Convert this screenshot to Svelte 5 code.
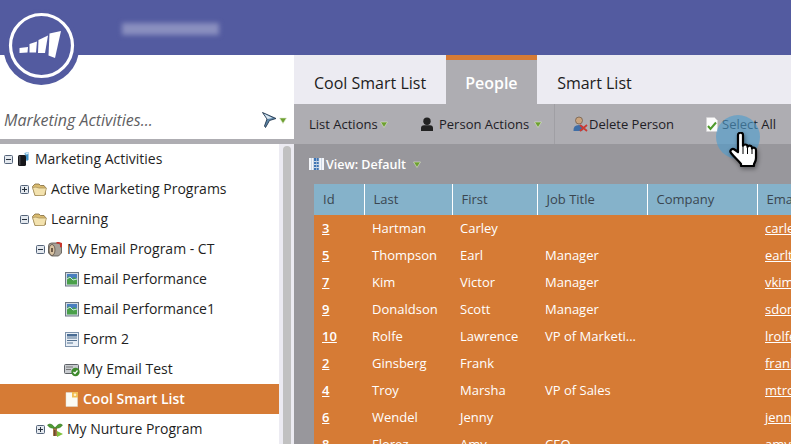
<script>
  const tree = [
    { label: 'Marketing Activities', depth: 0, toggle: 'minus', icon: 'book' },
    { label: 'Active Marketing Programs', depth: 1, toggle: 'plus', icon: 'folder' },
    { label: 'Learning', depth: 1, toggle: 'minus', icon: 'folder' },
    { label: 'My Email Program - CT', depth: 2, toggle: 'minus', icon: 'mailbox' },
    { label: 'Email Performance', depth: 3, icon: 'report' },
    { label: 'Email Performance1', depth: 3, icon: 'report' },
    { label: 'Form 2', depth: 3, icon: 'form' },
    { label: 'My Email Test', depth: 3, icon: 'test' },
    { label: 'Cool Smart List', depth: 3, icon: 'list', active: true },
    { label: 'My Nurture Program', depth: 2, toggle: 'plus', icon: 'sprout' }
  ];
  const columns = ['Id', 'Last', 'First', 'Job Title', 'Company', 'Email'];
  const rows = [
    ['3', 'Hartman', 'Carley', '', '', 'carley'],
    ['5', 'Thompson', 'Earl', 'Manager', '', 'earlt@'],
    ['7', 'Kim', 'Victor', 'Manager', '', 'vkim@'],
    ['9', 'Donaldson', 'Scott', 'Manager', '', 'sdona'],
    ['10', 'Rolfe', 'Lawrence', 'VP of Marketi...', '', 'lrolfe'],
    ['2', 'Ginsberg', 'Frank', '', '', 'frank'],
    ['4', 'Troy', 'Marsha', 'VP of Sales', '', 'mtroy'],
    ['6', 'Wendel', 'Jenny', '', '', 'jenny'],
    ['8', 'Florez', 'Amy', 'CEO', '', 'amyfl']
  ];
</script>

{#snippet arrow()}
  <svg class="arrow" viewBox="0 0 8 7" width="8" height="7"><path d="M0.5 1h7L4 6.5z" fill="#6da030" stroke="#dfe8d0" stroke-width="0.6" /></svg>
{/snippet}

{#snippet toggleBox(kind)}
  <svg class="toggle" viewBox="0 0 9 9" width="9" height="9">
    <rect x="0.5" y="0.5" width="8" height="8" rx="1" fill="#e3e8ee" stroke="#55647a" />
    <path d="M2 4.500h5" stroke="#26303c" stroke-width="1" />
    {#if kind === 'plus'}<path d="M4.500 2v5" stroke="#26303c" stroke-width="1" />{/if}
  </svg>
{/snippet}

{#snippet treeIcon(name)}
  <svg class="ticon" viewBox="0 0 16 16" width="16" height="16">
    {#if name === 'book'}
      <path d="M9.500 2l4-1v8l-2 1z" fill="#3f8fc4" />
      <path d="M10.500 2l3-1v2l-3 .8z" fill="#d6ecf8" />
      <rect x="3" y="4" width="8" height="11" rx="1.500" fill="#17171a" />
      <path d="M4 5h1.500v9H4z" fill="#44444a" />
    {:else if name === 'folder'}
      <path d="M1.500 5.500L4 3h4l1.500 1.500H13L14.500 6.500V13.500L4 14.500z" fill="#d9bb70" stroke="#80693c" stroke-width="0.8" />
      <path d="M1.500 6.500Q5 5.500 8 7L15.500 7 13.500 14.500H4z" fill="#f3e2ae" stroke="#a08a54" stroke-width="0.7" />
    {:else if name === 'mailbox'}
      <path d="M1.500 5q0-3 3-3h7l3 3v7l-3 3H4.500l-3-3z" fill="#a8a299" stroke="#55504a" stroke-width="0.8" />
      <ellipse cx="5" cy="9" rx="3" ry="5.500" fill="#d9c3a2" stroke="#5a5048" stroke-width="0.8" />
      <path d="M9.500 1h2.500l3 1v4l-2 .5V3l-3.500-.5z" fill="#c8352c" />
      <rect x="4" y="7" width="2" height="4" fill="#6d5a48" />
    {:else if name === 'report'}
      <rect x="1.500" y="1.500" width="13" height="13.500" fill="#cfd9e2" stroke="#6d7884" />
      <rect x="3" y="3" width="10" height="10.500" fill="#4aa04a" />
      <path d="M3 3h10v5l-3-2-2 2-3-3-2 2z" fill="#4a7fc0" />
      <path d="M3 8l3-2 3 3 4-1" stroke="#d8eef8" stroke-width="0.900" fill="none" />
    {:else if name === 'form'}
      <rect x="1.500" y="1.500" width="13" height="14" fill="#e8eef5" stroke="#7f94ac" />
      <rect x="3" y="3" width="10" height="2.500" fill="#4a6d94" />
      <path d="M3 7h10M3 9.500h10M3 12h6" stroke="#53708f" stroke-width="1.200" />
    {:else if name === 'test'}
      <rect x="0.500" y="3.500" width="14" height="9" rx="1" fill="#c9ccd0" stroke="#5d6166" />
      <path d="M2 6h7M2 8.500h5" stroke="#777" />
      <circle cx="11.500" cy="11" r="4.200" fill="#3d8a2c" />
      <path d="M9.500 11l1.500 1.500 2.500-3" stroke="#fff" stroke-width="1.200" fill="none" />
    {:else if name === 'list'}
      <path d="M2 1.500h8l3.500 3.500V15.500H2z" fill="#fbfbf4" stroke="#dcdcd4" stroke-width="0.500" />
      <rect x="8" y="1" width="6" height="5.500" fill="#f2bf55" />
      <circle cx="11" cy="3.800" r="1.300" fill="#fdf2d0" />
    {:else if name === 'sprout'}
      <path d="M6 7h4v8H6z" fill="#a5764a" />
      <path d="M7 9h1.500v6H7z" fill="#6c4a2c" />
      <path d="M8 7Q4 1 0.500 4 3 8 8 7zM8 7q4-6 7.500-3Q13 8 8 7z" fill="#4f9c32" stroke="#2c6b1c" stroke-width="0.500" />
      <path d="M10 10l6 3-6 3z" fill="#7fc23c" />
    {/if}
  </svg>
{/snippet}

<div class="app">
  <header class="topbar">
    <div class="account"></div>
  </header>

  <div class="logo">
    <svg viewBox="0 0 82 82" width="82" height="82">
      <circle cx="41.300" cy="40" r="38" fill="#535ba0" />
      <circle cx="41.500" cy="38.500" r="31" fill="none" stroke="#fff" stroke-width="3.200" />
      <g fill="#fff">
        <path d="M19.500 41l8.500-1-.5 5.500-8 .5z" />
        <path d="M29.500 37l7.500-2.500-1 11h-6.500z" />
        <path d="M38.500 33l9.500-4.500-3 17.500h-7z" />
        <path d="M49.500 26.500l11.500-2.500-6 27-6.500-2.500z" />
      </g>
    </svg>
  </div>

  <div class="body">
    <aside class="sidebar">
      <div class="search">
        <span class="search-text">Marketing Activities...</span>
        <svg class="funnel" viewBox="0 0 16 16" width="16" height="16">
          <path d="M1.500 0.500L15 6.500 8.500 8.500 4.500 15.500 3.500 14 6 7z" fill="#5c86a8" stroke="#24384e" stroke-width="0.900" />
          <path d="M3 1.800l8.500 4.200-5 1z" fill="#dce8f2" />
        </svg>
        {@render arrow()}
      </div>
      <div class="tree-wrap">
        <ul class="tree">
          {#each tree as item}
            <li class="node d{item.depth}" class:active={item.active}>
              {#if item.toggle}
                {@render toggleBox(item.toggle)}
              {/if}
              {@render treeIcon(item.icon)}
              <span class="label">{item.label}</span>
            </li>
          {/each}
        </ul>
        <div class="scrollbar"><div class="thumb"></div></div>
      </div>
    </aside>

    <main class="content">
      <nav class="tabs">
        <div class="tab">Cool Smart List</div>
        <div class="tab current">People</div>
        <div class="tab">Smart List</div>
      </nav>
      <div class="toolbar">
        <div class="tool first">List Actions {@render arrow()}</div>
        <div class="tool second">
          <svg viewBox="0 0 14 15" width="14" height="15"><circle cx="7" cy="4.200" r="3.700" fill="#222" /><path d="M1 14v-3q0-2.500 3-2.800h6q3 .3 3 2.800v3z" fill="#222" /></svg>
          <span>Person Actions</span>
          <span class="gap-arrow">{@render arrow()}</span>
        </div>
        <div class="tool third">
          <svg viewBox="0 0 16 16" width="16" height="16">
            <circle cx="7" cy="4.500" r="3.500" fill="#c9a37e" stroke="#6a5440" stroke-width="0.700" />
            <path d="M1.500 15q-.5-6 5.500-6 4 0 5 3l-2 3z" fill="#3f6ea6" />
            <path d="M8 9l7 6M15 9l-7 6" stroke="#cc3a32" stroke-width="1.800" />
          </svg>
          <span>Delete Person</span>
        </div>
        <div class="tool fourth">
          <svg viewBox="0 0 12 15" width="12" height="15">
            <path d="M0.500 0.500h8l3 3v11h-11z" fill="#fbfbfb" stroke="#d0d0d0" stroke-width="0.500" />
            <path d="M2 9l2.500 3L10 5.500" stroke="#4f9a2c" stroke-width="2" fill="none" />
          </svg>
          <span>Select All</span>
        </div>
      </div>
      <div class="viewbar">
        <svg viewBox="0 0 15 12" width="15" height="12">
          <rect width="15" height="12" fill="#f4f6fa" />
          <path d="M5 0h5v12H5z" fill="#3f74b4" />
          <path d="M0 3.500h15M0 6.500h15M0 9.500h15" stroke="#f4f6fa" stroke-width="0.800" />
          <path d="M2.500 0v12M4.500 0v12M7.500 0v12M10 0v12M12.500 0v12" stroke="#b9c8da" stroke-width="0.700" />
        </svg>
        <span>View: Default</span>
        {@render arrow()}
      </div>
      <div class="grid-wrap">
        <table>
          <thead>
            <tr>
              {#each columns as col}<th>{col}</th>{/each}
            </tr>
          </thead>
          <tbody>
            {#each rows as row}
              <tr>
                {#each row as cell, i}
                  <td class:link={i === 0 || i === 5}>{cell}</td>
                {/each}
              </tr>
            {/each}
          </tbody>
        </table>
      </div>
    </main>
  </div>

  <div class="spot"></div>
  <svg class="hand" viewBox="0 0 30 36" width="30" height="36">
    <path d="M9 3c0-3 5-3 5 0V14c.5-2 4-2 4.500 0v1c.5-2 4-2 4.500 .5v1c1-1.500 4-1 4 1.500V26c0 3-1 4-2 6v2H12v-2C9 28 5 25 2 21c-2-3 1.500-5 3.500-3.500L9 20z" fill="#fff" stroke="#000" stroke-width="2.200" stroke-linejoin="round" />
    <path d="M14 15v7M18.500 16v6M23 17v5" stroke="#000" stroke-width="1" />
  </svg>
</div>

<style>
  :global(body) {
    margin: 0;
  }
  .app {
    position: relative;
    width: 791px;
    height: 444px;
    overflow: hidden;
    font-family: "Open Sans", sans-serif;
    background: #fff;
    color: #1c1c1c;
  }
  .topbar {
    height: 55px;
    background: #535ba0;
    display: flex;
    align-items: flex-start;
    padding: 23px 0 0 122px;
    box-sizing: border-box;
  }
  .account {
    width: 97px;
    height: 12px;
    background: #8a8fbf;
    filter: blur(2.500px);
  }
  .logo {
    position: absolute;
    left: 0;
    top: 7px;
    width: 82px;
    height: 82px;
  }
  .logo svg {
    display: block;
  }
  .body {
    display: flex;
    height: 389px;
  }
  .sidebar {
    width: 294px;
    flex: none;
    display: flex;
    flex-direction: column;
  }
  .search {
    height: 89px;
    flex: none;
    box-sizing: border-box;
    border-bottom: 5px solid #aeadb2;
    display: flex;
    align-items: flex-end;
    padding: 0 7px 7px 4px;
    gap: 2px;
  }
  .search-text {
    flex: 1;
    font-style: italic;
    font-size: 16px;
    line-height: 24px;
    color: #5f5f63;
  }
  .funnel {
    margin-bottom: 4px;
  }
  .search .arrow {
    margin-bottom: 8px;
  }
  .tree-wrap {
    flex: 1;
    display: flex;
    min-height: 0;
  }
  .tree {
    list-style: none;
    margin: 0;
    padding: 0;
    width: 279px;
    flex: none;
  }
  .node {
    height: 30px;
    display: flex;
    align-items: center;
    font-size: 14px;
    color: #1f1f1f;
    box-sizing: border-box;
    white-space: nowrap;
  }
  .d0 { padding-left: 4px; }
  .d1 { padding-left: 20px; }
  .d2 { padding-left: 36px; }
  .d3 { padding-left: 64px; }
  .active {
    background: #d67b35;
    color: #fff;
    font-weight: 600;
  }
  .toggle {
    flex: none;
    margin-right: 2px;
  }
  .ticon {
    flex: none;
    margin-right: 4px;
  }
  .d3 .ticon {
    margin-right: 3px;
  }
  .label {
    line-height: 30px;
  }
  .scrollbar {
    flex: 1;
    background: #ecebf2;
    padding: 2px 3px 0 4px;
  }
  .thumb {
    height: 400px;
    border-radius: 4px 4px 0 0;
    background: #c1c1c1;
  }
  .content {
    flex: 1;
    min-width: 0;
    display: flex;
    flex-direction: column;
  }
  .tabs {
    height: 49px;
    background: #ecebf2;
    display: flex;
    flex: none;
  }
  .tab {
    font-size: 16px;
    line-height: 23px;
    padding: 17px 20px 0;
    color: #1c1c1c;
  }
  .tab.current {
    background: #aeadb2;
    border-top: 5px solid #d67b35;
    padding: 12px 0 0 19px;
    color: #fff;
    font-weight: 600;
    width: 91px;
    box-sizing: border-box;
  }
  .toolbar {
    height: 40px;
    flex: none;
    background: #aeadb2;
    display: flex;
    align-items: center;
    font-size: 13px;
    color: #1e2026;
    white-space: nowrap;
  }
  .tool {
    display: flex;
    align-items: center;
    height: 100%;
    box-sizing: border-box;
  }
  .tool.first {
    padding-left: 15px;
    width: 126px;
    gap: 4px;
  }
  .tool.first .arrow {
    margin-left: -2px;
  }
  .tool.second {
    width: 135px;
    gap: 5px;
    border-right: 1px solid #a09fa4;
  }
  .gap-arrow {
    display: flex;
    margin-left: 0;
  }
  .tool.third {
    width: 151px;
    padding-left: 17px;
    gap: 1px;
  }
  .tool.fourth {
    gap: 4px;
  }
  .viewbar {
    height: 40px;
    flex: none;
    background: #98979c;
    display: flex;
    align-items: center;
    padding-left: 15px;
    gap: 2px;
    font-size: 12.500px;
    font-weight: 600;
    color: #fff;
  }
  .viewbar .arrow {
    margin-left: 5px;
  }
  .grid-wrap {
    flex: 1;
    background: #98979c;
    padding-left: 20px;
    min-height: 0;
    overflow: hidden;
  }
  table {
    border-collapse: collapse;
    table-layout: fixed;
    width: 477px;
    font-size: 13px;
  }
  th {
    height: 31px;
    box-sizing: border-box;
    background: #85b2ca;
    color: #3a4650;
    font-weight: 400;
    text-align: left;
    padding: 0 0 2px 9px;
    border-left: 1px solid #fff;
    white-space: nowrap;
    overflow: hidden;
  }
  th:first-child {
    border-left: 0;
    width: 50px;
  }
  th:nth-child(2) { width: 88px; }
  th:nth-child(3) { width: 85px; }
  th:nth-child(4) { width: 110px; }
  th:nth-child(5) { width: 110px; }
  th:nth-child(6) { width: 34px; }
  td {
    height: 27px;
    padding: 0 0 2px 8px;
    background: #d67b35;
    color: #fff;
    font-weight: 500;
    white-space: nowrap;
    overflow: hidden;
    box-sizing: border-box;
  }
  td.link {
    text-decoration: underline;
    font-weight: 400;
  }
  td:first-child {
    font-weight: 600;
  }
  .spot {
    position: absolute;
    left: 716px;
    top: 115px;
    width: 44px;
    height: 44px;
    border-radius: 50%;
    background: rgba(77, 156, 205, 0.62);
  }
  .hand {
    position: absolute;
    left: 729px;
    top: 132px;
    filter: drop-shadow(1px 2px 2px rgba(0, 0, 0, 0.4));
  }
</style>
